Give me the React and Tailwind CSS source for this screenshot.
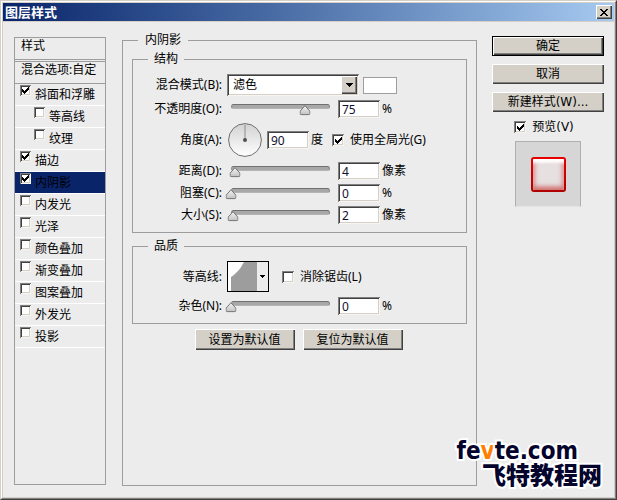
import { useState } from "react";
import clsx from "clsx";

const sunken =
  "bg-white shadow-[inset_1px_1px_0_#808080,inset_-1px_-1px_0_#f6f5f2,inset_2px_2px_0_#404040,inset_-2px_-2px_0_#d4d0c8]";
const raised =
  "bg-[#d4d0c8] shadow-[inset_1px_1px_0_#fff,inset_-1px_-1px_0_#404040,inset_-2px_-2px_0_#808080]";

const initialEffects = [
  { id: "bevel", label: "斜面和浮雕", checked: true },
  { id: "bevel-contour", label: "等高线", checked: false, nested: true },
  { id: "texture", label: "纹理", checked: false, nested: true },
  { id: "stroke", label: "描边", checked: true },
  { id: "inner-shadow", label: "内阴影", checked: true },
  { id: "inner-glow", label: "内发光", checked: false },
  { id: "satin", label: "光泽", checked: false },
  { id: "color-overlay", label: "颜色叠加", checked: false },
  { id: "gradient-overlay", label: "渐变叠加", checked: false },
  { id: "pattern-overlay", label: "图案叠加", checked: false },
  { id: "outer-glow", label: "外发光", checked: false },
  { id: "drop-shadow", label: "投影", checked: false },
];

function Checkbox({ id, checked, onChange, small }) {
  return (
    <span className={clsx("relative block shrink-0", small ? "size-[11px]" : "size-3")}>
      <input
        id={id}
        type="checkbox"
        checked={checked}
        onChange={(e) => onChange(e.target.checked)}
        className={clsx("block size-full appearance-none", sunken)}
      />
      {checked && (
        <svg
          viewBox="0 0 7 7"
          shapeRendering="crispEdges"
          className={clsx("pointer-events-none absolute size-[7px]", small ? "top-0.5 left-0.5" : "top-[3px] left-[3px]")}
        >
          <path d="M0 2h1v1h1v1h1v-1h1v-1h1v-1h1v-1h1v3h-1v1h-1v1h-1v1h-1v1h-1v-1h-1v-1h-1z" />
        </svg>
      )}
    </span>
  );
}

function Group({ title, className, children }) {
  return (
    <fieldset className={clsx("min-w-0 border border-[#9d9d9d]", className)}>
      <legend className="ml-[15px] h-[18px] px-1.5 leading-[18px]">{title}</legend>
      {children}
    </fieldset>
  );
}

function Row({ label, htmlFor, className, children }) {
  return (
    <div className={clsx("flex items-center", className)}>
      <label htmlFor={htmlFor} className="mr-[5px] w-[89px] shrink-0 text-right whitespace-nowrap">
        {label}
      </label>
      {children}
    </div>
  );
}

function NumberBox({ id, value, onChange, label }) {
  return (
    <input
      id={id}
      type="text"
      inputMode="numeric"
      aria-label={label}
      value={value}
      onChange={(e) => onChange(Number(e.target.value) || 0)}
      className={clsx("h-[18px] w-[42px] px-1 text-[#101030] outline-none", sunken)}
    />
  );
}

function SliderRow({ id, label, name, unit, initial, className }) {
  const [value, setValue] = useState(initial);

  return (
    <Row label={label} htmlFor={id} className={className}>
      <div className="relative mr-2 ml-1 h-[18px] w-[99px] shrink-0">
        <input
          type="range"
          min="0"
          max="100"
          aria-label={name}
          value={value}
          onChange={(e) => setValue(Number(e.target.value))}
          className="mt-1 block h-[5px] w-full appearance-none rounded-full border border-t-[#707070] border-r-[#8c8c8c] border-b-[#b4b4b4] border-l-[#8c8c8c] bg-[#a8a8a8] [&::-webkit-slider-thumb]:size-2.5 [&::-webkit-slider-thumb]:appearance-none"
        />
        <svg
          viewBox="0 0 11 11"
          className="pointer-events-none absolute top-[5px] size-[11px] -translate-x-1/2"
          style={{ left: `${Math.min(value, 100)}%` }}
        >
          <defs>
            <linearGradient id={`${id}-thumb`} x1="0" y1="0" x2="0" y2="1">
              <stop offset="0" stopColor="#f4f4f4" />
              <stop offset="1" stopColor="#c2c2c2" />
            </linearGradient>
          </defs>
          <path
            d="M5.5 .7 10.4 6.2V8.6Q10.4 9.6 9.4 9.6H1.6Q.6 9.6 .6 8.6V6.2Z"
            fill={`url(#${id}-thumb)`}
            stroke="#777"
          />
        </svg>
      </div>
      <NumberBox id={id} value={value} onChange={setValue} />
      <span className="ml-0.5">{unit}</span>
    </Row>
  );
}

function Button({ primary, className, children }) {
  return (
    <button
      type="button"
      className={clsx(
        "flex items-center justify-center whitespace-nowrap",
        raised,
        primary && "border border-black",
        className
      )}
    >
      {children}
    </button>
  );
}

function EffectList() {
  const [effects, setEffects] = useState(initialEffects);

  const toggle = (id, checked) =>
    setEffects(effects.map((effect) => (effect.id === id ? { ...effect, checked } : effect)));

  return (
    <nav className="mt-[15px] mb-3 w-[92px] shrink-0 border border-[#9d9d9d]">
      <div className="h-[22px] border-b border-[#9d9d9d] pl-1.5 leading-4">样式</div>
      <div className="mt-px h-[23px] border-y border-[#9d9d9d] pl-1.5 leading-4 whitespace-nowrap">
        混合选项:自定
      </div>
      <ul>
        {effects.map((effect) => (
          <li
            key={effect.id}
            className={clsx(
              "flex h-[22px] items-start border-b border-white pt-px",
              effect.nested ? "pl-[19px]" : "pl-[5px]",
              effect.id === "inner-shadow" && "bg-[#0a246a]"
            )}
          >
            <Checkbox
              id={effect.id}
              small
              checked={effect.checked}
              onChange={(checked) => toggle(effect.id, checked)}
            />
            <label htmlFor={effect.id} className="ml-1 leading-5 whitespace-nowrap">
              {effect.label}
            </label>
          </li>
        ))}
      </ul>
    </nav>
  );
}

function InnerShadowPanel() {
  const [mode, setMode] = useState("滤色");
  const [angle, setAngle] = useState(90);
  const [globalLight, setGlobalLight] = useState(true);
  const [antiAlias, setAntiAlias] = useState(false);

  return (
    <fieldset className="mt-[9px] mr-[15px] mb-[11px] ml-4 min-w-0 flex-1 border border-[#9d9d9d] px-[9px]">
      <legend className="ml-1.5 h-[18px] px-[7px] leading-[18px]">内阴影</legend>

      <Group title="结构" className="mt-px pb-2">
        <Row label="混合模式(B):" htmlFor="blend-mode" className="mt-1.5">
          <div className="relative h-[22px] w-[132px]">
            <select
              id="blend-mode"
              value={mode}
              onChange={(e) => setMode(e.target.value)}
              className={clsx("block size-full appearance-none pl-1.5 outline-none", sunken)}
            >
              <option>正常</option>
              <option>滤色</option>
              <option>正片叠底</option>
            </select>
            <span
              className={clsx(
                "pointer-events-none absolute top-0.5 right-0.5 flex h-[18px] w-4 items-center justify-center",
                raised
              )}
            >
              <svg viewBox="0 0 7 4" shapeRendering="crispEdges" className="h-1 w-[7px]">
                <path d="M0 0h7v1h-1v1h-1v1h-1v1h-1v-1h-1v-1h-1v-1h-1z" />
              </svg>
            </span>
          </div>
          <button
            type="button"
            aria-label="阴影颜色"
            className="ml-1 h-[17px] w-[34px] border border-[#9d9d9d] bg-white"
          />
        </Row>
        <SliderRow id="opacity" name="不透明度" label="不透明度(O):" unit="%" initial={75} className="mt-1" />
        <Row label="角度(A):" htmlFor="angle" className="mt-[5px]">
          <svg viewBox="0 0 34 34" className="ml-px size-[34px] shrink-0">
            <defs>
              <linearGradient id="dial" x1="0" y1="0" x2="0" y2="1">
                <stop offset="0" stopColor="#d2d2d2" />
                <stop offset="1" stopColor="#fff" />
              </linearGradient>
            </defs>
            <circle cx="17" cy="17" r="16.4" fill="url(#dial)" stroke="#6e6e6e" />
            <g transform={`rotate(${90 - angle} 17 17)`}>
              <path d="M17 17V2" stroke="#8a8a8a" />
              <circle cx="17" cy="17" r="2" fill="#505050" />
            </g>
          </svg>
          <span className="ml-[5px] flex items-center">
            <NumberBox id="angle" value={angle} onChange={setAngle} />
          </span>
          <span className="ml-0.5">度</span>
          <span className="ml-[9px]">
            <Checkbox id="global-light" checked={globalLight} onChange={setGlobalLight} />
          </span>
          <label htmlFor="global-light" className="ml-1.5 whitespace-nowrap">
            使用全局光(G)
          </label>
        </Row>
        <SliderRow id="distance" name="距离" label="距离(D):" unit="像素" initial={4} className="mt-[5px]" />
        <SliderRow id="choke" name="阻塞" label="阻塞(C):" unit="%" initial={0} className="mt-1" />
        <SliderRow id="size" name="大小" label="大小(S):" unit="像素" initial={2} className="mt-1" />
      </Group>

      <Group title="品质" className="mt-1 pb-2">
        <Row label="等高线:" htmlFor="contour" className="mt-1.5">
          <button
            id="contour"
            type="button"
            className="flex h-[31px] w-[42px] shrink-0 items-stretch border border-black bg-[#ececec]"
          >
            <svg viewBox="0 0 29 29" className="h-full w-[29px]">
              <path d="M0 0h29v29H0z" fill="#9d9d9d" />
              <path d="M0 0H16C14 3 13 6 10 9C7 12 5 14 3 15V29H0Z" fill="#fff" />
            </svg>
            <svg viewBox="0 0 11 29" shapeRendering="crispEdges" className="h-full w-[11px]">
              <path d="M3 13h5v1h-1v1h-1v1h-1v-1h-1v-1h-1z" />
            </svg>
          </button>
          <span className="ml-[13px]">
            <Checkbox id="anti-alias" checked={antiAlias} onChange={setAntiAlias} />
          </span>
          <label htmlFor="anti-alias" className="ml-1.5 whitespace-nowrap">
            消除锯齿(L)
          </label>
        </Row>
        <SliderRow id="noise" name="杂色" label="杂色(N):" unit="%" initial={0} className="mt-[5px]" />
      </Group>

      <div className="mt-[5px] flex justify-center gap-2 pr-0.5">
        <Button className="h-[21px] w-[100px]">设置为默认值</Button>
        <Button className="h-[21px] w-[100px]">复位为默认值</Button>
      </div>
    </fieldset>
  );
}

function Actions() {
  const [preview, setPreview] = useState(true);

  return (
    <aside className="mt-3.5 mr-2.5 flex w-28 shrink-0 flex-col gap-2 font-['DejaVu_Sans','Noto_Sans_CJK_SC',sans-serif]">
      <Button primary className="h-5">确定</Button>
      <Button className="h-5">取消</Button>
      <Button className="h-5">新建样式(W)...</Button>
      <div className="flex items-center justify-center pr-2">
        <Checkbox id="preview" checked={preview} onChange={setPreview} />
        <label htmlFor="preview" className="ml-1.5 leading-[14px]">
          预览(V)
        </label>
      </div>
      <div className="-mt-px flex size-[66px] items-center justify-center self-center border border-[#b0b0b0] border-b-[#e4e4e4] bg-[#d6d6d6]">
        <div className="size-[35px] rounded-[3px] bg-linear-to-b from-[#e80000] to-[#b00000] p-0.5">
          <div className="size-full rounded-[1px] bg-[#e6e0e0] shadow-[inset_0_5px_3px_-1px_#fff,inset_0_-3px_5px_#d07070,inset_0_0_6px_#dc8484]" />
        </div>
      </div>
    </aside>
  );
}

export default function App() {
  return (
    <div className="relative flex min-h-screen flex-col border border-t-[#d4d0c8] border-r-[#404040] border-b-[#404040] border-l-[#d4d0c8] bg-[#ececec] font-['Noto_Sans','Noto_Sans_CJK_SC',sans-serif] text-[12px] leading-4 text-black">
      <div className="flex flex-1 flex-col border border-t-white border-r-[#808080] border-b-[#808080] border-l-white">
        <div className="flex flex-1 flex-col border border-[#d4d0c8]">
          <header className="flex h-[19px] items-center justify-between border-b border-[#d4d0c8] bg-linear-to-r from-[#0a246a] to-[#a6caf0] pr-0.5 pl-0.5">
            <h1 className="text-[13px] font-bold text-white">图层样式</h1>
            <button
              type="button"
              aria-label="关闭"
              className={clsx("flex h-3.5 w-4 items-center justify-center", raised)}
            >
              <svg viewBox="0 0 8 7" shapeRendering="crispEdges" className="h-[7px] w-2">
                <path d="M0 0h2v1h1v1h2v-1h1v-1h2v1h-1v1h-1v1h-1v1h1v1h1v1h1v1h-2v-1h-1v-1h-2v1h-1v1h-2v-1h1v-1h1v-1h1v-1h-1v-1h-1v-1h-1z" />
              </svg>
            </button>
          </header>
          <main className="flex flex-1 pl-[11px]">
            <EffectList />
            <InnerShadowPanel />
            <Actions />
          </main>
        </div>
      </div>

      {/* site watermark over the corner of the dialog */}
      <div className="pointer-events-none absolute right-3.5 bottom-3 flex flex-col text-right text-[#04042c] [paint-order:stroke_fill] [-webkit-text-stroke:4px_#fff]">
        <span className="mr-6 font-['DejaVu_Sans_Condensed','DejaVu_Sans',sans-serif] text-[24px] leading-6 font-bold">
          fe<span className="text-[#ff8000]">v</span>te.com
        </span>
        <span className="text-[24px] leading-6 font-black">飞特教程网</span>
      </div>
    </div>
  );
}
